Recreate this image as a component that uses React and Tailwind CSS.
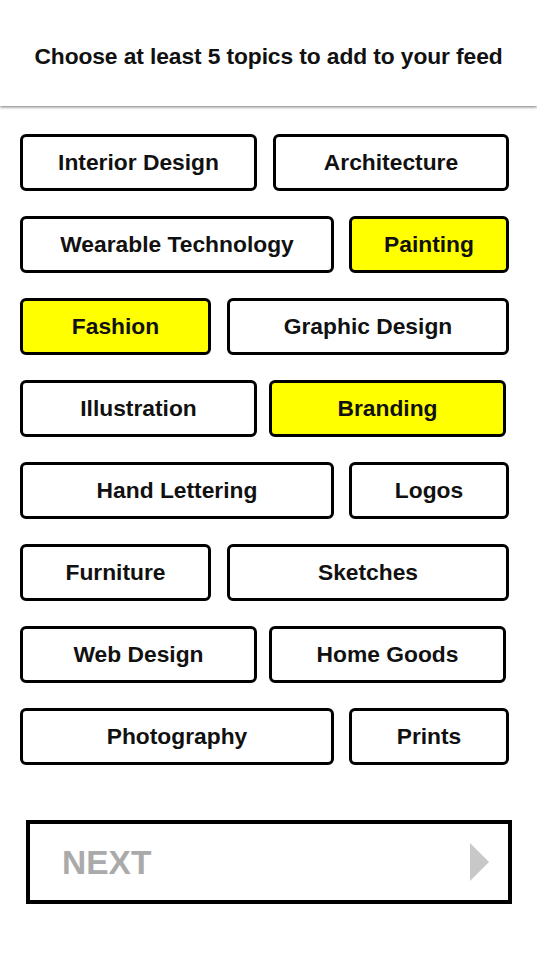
import { useState } from 'react';

const rows = [
  [['Interior Design', 'w-[237px]'], ['Architecture', 'w-[236px]']],
  [['Wearable Technology', 'w-[314px]'], ['Painting', 'w-[160px]']],
  [['Fashion', 'w-[191px]'], ['Graphic Design', 'w-[282px]']],
  [['Illustration', 'w-[237px]'], ['Branding', 'w-[237px]']],
  [['Hand Lettering', 'w-[314px]'], ['Logos', 'w-[160px]']],
  [['Furniture', 'w-[191px]'], ['Sketches', 'w-[282px]']],
  [['Web Design', 'w-[237px]'], ['Home Goods', 'w-[237px]']],
  [['Photography', 'w-[314px]'], ['Prints', 'w-[160px]']],
];

const gaps = ['gap-[16px]', 'gap-[15px]', 'gap-[16px]', 'gap-[12px]', 'gap-[15px]', 'gap-[16px]', 'gap-[12px]', 'gap-[15px]'];

const App = () => {
  const [picked, setPicked] = useState(['Painting', 'Fashion', 'Branding']);

  const toggle = (name) => {
    setPicked((p) => (p.includes(name) ? p.filter((n) => n !== name) : [...p, name]));
  };

  return (
    <div className="w-[537px] h-[956px] bg-white font-['Liberation_Sans',Arial,sans-serif] overflow-hidden">
      {/* Header */}
      <div className="h-[106px] flex items-center justify-center bg-white shadow-[0_1px_3px_rgba(0,0,0,0.55)] relative z-10">
        <h1 className="text-[22.8px] font-bold text-[#111] pt-[7px] tracking-[-0.1px]">
          Choose at least 5 topics to add to your feed
        </h1>
      </div>

      {/* Topics */}
      <div className="pt-[28px] pl-[20px] flex flex-col gap-[25px]">
        {rows.map((row, i) => (
          <div key={i} className={`flex ${gaps[i]}`}>
            {row.map(([name, w]) => (
              <button
                key={name}
                onClick={() => toggle(name)}
                className={`${w} h-[57px] border-[3px] border-black rounded-[6px] text-[22.8px] font-bold text-[#111] flex items-center justify-center ${
                  picked.includes(name) ? 'bg-[#ffff00]' : 'bg-white'
                }`}
              >
                {name}
              </button>
            ))}
          </div>
        ))}
      </div>

      {/* Next */}
      <div className="pl-[26px] pt-[55px]">
        <button className="w-[486px] h-[84px] border-[4px] border-black bg-white flex items-center justify-between pl-[32px] pr-[19px]">
          <span className="text-[33.5px] font-bold text-[#aaaaaa] pt-[2px]">NEXT</span>
          <svg width="19" height="38" viewBox="0 0 19 38">
            <polygon points="0,0 19,19 0,38" fill="#c8c8c8" />
          </svg>
        </button>
      </div>
    </div>
  );
};

export default App;
